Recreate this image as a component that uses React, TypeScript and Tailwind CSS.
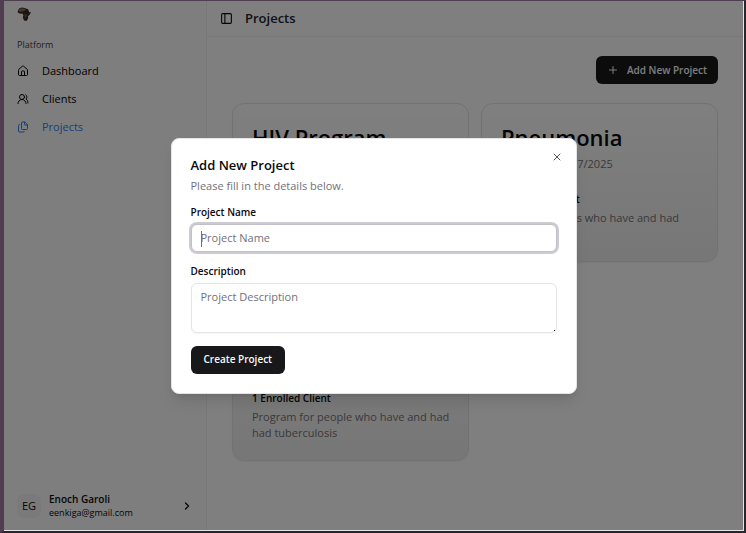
import { ChevronRight, Files, House, PanelLeft, Plus, UsersRound, X } from "lucide-react";

const links = [
  { label: "Dashboard", Icon: House, active: false },
  { label: "Clients", Icon: UsersRound, active: false },
  { label: "Projects", Icon: Files, active: true },
];

const projects = [
  {
    name: "HIV Program",
    created: "Created on 4/27/2025",
    enrolled: "1 Enrolled Client",
    about: "For the patients who have and had HIV infection",
  },
  {
    name: "Pneumonia",
    created: "Created on 4/27/2025",
    enrolled: "1 Enrolled Client",
    about: "For the patients who have and had lung infection",
  },
  {
    name: "Tuberculosis Program",
    created: "Created on 4/27/2025",
    enrolled: "1 Enrolled Client",
    about: "Program for people who have and had had tuberculosis",
  },
];

function AfricaLogo() {
  return (
    <svg viewBox="0 0 24 24" className="h-3.5 w-3.5" aria-label="Home" role="img">
      <path
        d="M4 2 9 1l5 1 5 2 2 5h3l-2 4-3 3v4l-3 4-4-1-2-5 1-4-2-3-4 .5L1 9l1-4Z"
        fill="#3a2c20"
      />
      <path d="M4 3 9 2l6 2-2 3-7 1-4-1Z" fill="#85705c" />
      <path d="m13 12 4 1-1 4-2 2-1-3Z" fill="#6e5a44" />
    </svg>
  );
}

function Sidebar() {
  return (
    <aside className="flex w-[203px] shrink-0 flex-col border-r border-[#f0f0f0] bg-[#fdfdfd] px-[13px] pt-1.5 pb-[11px]">
      <a href="#home" className="self-start">
        <AfricaLogo />
      </a>
      <h2 className="mt-4 text-[9px] leading-4 text-[#404040]">Platform</h2>
      <nav className="mt-1 flex flex-col">
        {links.map(({ label, Icon, active }) => (
          <a
            key={label}
            href="#nav"
            className={
              active
                ? "flex h-7 items-center gap-[13px] text-[#2b7fff]"
                : "flex h-7 items-center gap-[13px] text-black"
            }
          >
            <Icon className="h-3 w-3" />
            <span>{label}</span>
          </a>
        ))}
      </nav>
      <button type="button" className="mt-auto flex items-center gap-2 text-left">
        <span className="flex h-6 w-6 items-center justify-center rounded-md bg-[#f5f5f5]">EG</span>
        <span className="flex flex-1 flex-col leading-[13px]">
          <span className="text-[10px] font-semibold">Enoch Garoli</span>
          <span className="text-[9px]">eenkiga@gmail.com</span>
        </span>
        <ChevronRight className="h-3 w-3" strokeWidth={2.5} />
      </button>
    </aside>
  );
}

function ProjectCard({ project }: { project: (typeof projects)[number] }) {
  return (
    <article className="rounded-xl border border-[#e5e5e5] bg-linear-to-b from-white to-[#eeeeee] py-[19px] pr-[15px] pl-[19px] shadow-xs">
      <h2 className="text-[22px] leading-7 font-semibold">{project.name}</h2>
      <p className="mt-[5px] leading-4 text-[#737373]">{project.created}</p>
      <p className="mt-[19px] text-[10px] leading-4 font-semibold">{project.enrolled}</p>
      <p className="mt-[3px] leading-4 text-[#737373]">{project.about}</p>
    </article>
  );
}

function AddProjectDialog() {
  return (
    <div className="absolute inset-0 flex items-center justify-center bg-black/50">
      <div
        role="dialog"
        aria-labelledby="dialog-title"
        className="relative w-full max-w-[406px] rounded-lg border border-[#e5e5e5] bg-white p-[19px] shadow-lg"
      >
        <h2 id="dialog-title" className="text-[13px] leading-[14px] font-semibold">
          Add New Project
        </h2>
        <p className="mt-1.5 leading-4 text-[#71717a]">Please fill in the details below.</p>
        <form className="mt-3 flex flex-col items-start gap-[13px]">
          <div className="flex w-full flex-col gap-1.5">
            <label htmlFor="project-name" className="text-[10px] leading-3 font-semibold">
              Project Name
            </label>
            <div className="relative flex">
              <input
                id="project-name"
                type="text"
                placeholder="Project Name"
                className="h-7 w-full rounded-md border border-[#c2c1ca] bg-white px-[9px] ring-2 ring-[#cccbd2] outline-none placeholder:text-[#71717a]"
              />
              <span className="absolute top-[7px] left-2.5 h-4 w-px bg-[#737373]" />
            </div>
          </div>
          <div className="flex w-full flex-col gap-1.5">
            <label htmlFor="project-description" className="text-[10px] leading-3 font-semibold">
              Description
            </label>
            <div className="relative flex">
              <textarea
                id="project-description"
                placeholder="Project Description"
                className="h-[50px] w-full resize-none rounded-md border border-[#e5e5e5] bg-white px-[9px] py-[5px] leading-4 shadow-xs outline-none placeholder:text-[#71717a]"
              />
              <span className="absolute right-0.5 bottom-0.5 h-px w-px bg-black" />
            </div>
          </div>
          <button
            type="submit"
            className="h-7 rounded-md bg-[#18181b] px-[13px] text-[10px] font-semibold text-[#fafafa]"
          >
            Create Project
          </button>
        </form>
        <button
          type="button"
          aria-label="Close"
          className="absolute top-3 right-[13px] text-[#52525b]"
        >
          <X className="h-3 w-3" />
        </button>
      </div>
    </div>
  );
}

export default function App() {
  return (
    <div className="flex h-screen border-t border-r-2 border-b-2 border-l-4 border-t-[#4f3d50] border-r-[#2b2530] border-b-[#2b2530] border-l-[#4f3d50] font-['Open_Sans','Noto_Sans',sans-serif] text-[11px] text-[#0a0a0a]">
      <div className="flex min-w-0 flex-1 border-r border-b border-[#e4e4e4]">
        <div className="relative flex min-w-0 flex-1 overflow-hidden bg-white">
          <Sidebar />
          <div className="flex min-w-0 flex-1 flex-col">
            <header className="flex h-9 shrink-0 items-center gap-3 border-b border-[#f0f0f0] px-[13px]">
              <button type="button" aria-label="Toggle sidebar">
                <PanelLeft className="h-[13px] w-[13px]" />
              </button>
              <h1 className="text-[13px] font-semibold text-[#1e2433]">Projects</h1>
            </header>
            <main className="flex flex-col px-[25px] pt-[19px]">
              <button
                type="button"
                className="flex h-7 items-center gap-2 self-end rounded-md bg-[#18181b] px-[11px] text-[10px] font-semibold text-[#fafafa]"
              >
                <Plus className="h-3 w-3" />
                Add New Project
              </button>
              <div className="mt-[19px] grid grid-cols-2 gap-3">
                {projects.map((project) => (
                  <ProjectCard key={project.name} project={project} />
                ))}
              </div>
            </main>
          </div>
          <AddProjectDialog />
        </div>
      </div>
    </div>
  );
}
